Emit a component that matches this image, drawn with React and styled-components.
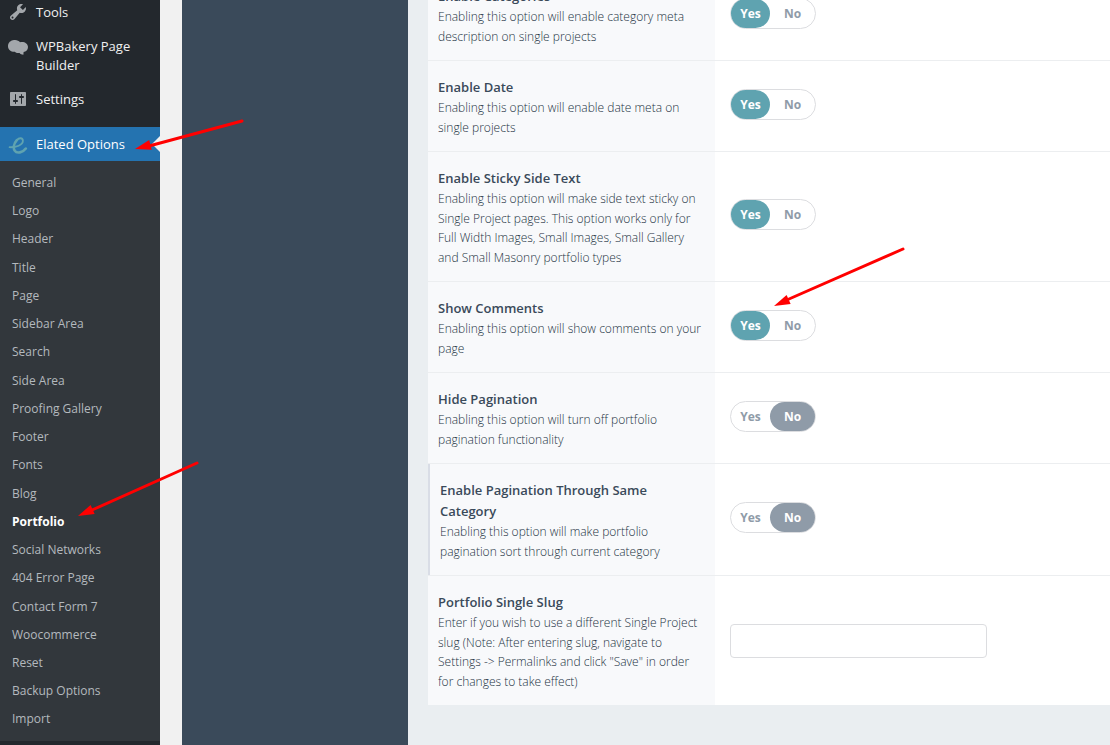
import React, { useState } from 'react'
import styled, { createGlobalStyle } from 'styled-components'

const GlobalStyle = createGlobalStyle`
  * {
    box-sizing: border-box;
  }

  body {
    margin: 0;
    background: #f1f1f1;
    font-family: 'Open Sans', 'Noto Sans', sans-serif;
    overflow: hidden;
  }
`

const Page = styled.div`
  position: relative;
  display: flex;
  height: 100vh;
  overflow: hidden;
`

const Sidebar = styled.nav`
  width: 160px;
  flex-shrink: 0;
  margin-top: -5px;
  background: #23282d;
`

const MenuItem = styled.a`
  position: relative;
  display: flex;
  align-items: flex-start;
  padding: 8px 12px 7px 8px;
  gap: 8px;
  background: ${props => (props.$active ? '#2473b0' : 'transparent')};
  color: ${props => (props.$active ? '#fff' : '#f0f0f1')};
  font-size: 13px;
  line-height: 19px;
  text-decoration: none;

  svg {
    flex-shrink: 0;
    width: 20px;
    height: 20px;
    margin-top: -1px;
    fill: #a3a7ab;
  }

  &::after {
    content: '';
    display: ${props => (props.$active ? 'block' : 'none')};
    position: absolute;
    right: 0;
    top: 50%;
    margin-top: -8px;
    border: 8px solid transparent;
    border-right-color: #f1f1f1;
  }
`

const Separator = styled.div`
  height: 11px;
`

const SubMenu = styled.ul`
  margin: 0;
  padding: 8px 0 7px;
  list-style: none;
  background: #32373c;
`

const SubItem = styled.a`
  display: block;
  padding: 5px 12px;
  color: ${props => (props.$current ? '#fff' : '#b4b9be')};
  font-size: 12px;
  font-weight: ${props => (props.$current ? 700 : 400)};
  line-height: 1.52;
  text-decoration: none;
`

const OptionsNav = styled.aside`
  width: 226px;
  flex-shrink: 0;
  margin-left: 22px;
  background: #3a4a5a;
`

const Content = styled.main`
  flex: 1;
  min-width: 0;
  padding-left: 20px;
  background: #eaeef1;
`

const OptionsForm = styled.form`
  margin-top: -31px;
  background: #fff;
`

const Row = styled.div`
  display: grid;
  grid-template-columns: 287px 1fr;
  border-top: 1px solid #eceef0;
`

const Description = styled.div`
  padding: 16px 10px 14px;
  background: #f8f9fb;
  border-left: ${props => (props.$dependent ? '2px solid #d9dde6' : '0')};
  color: #3a4a5a;
`

const Title = styled.label`
  display: block;
  font-size: 13px;
  font-weight: 600;
  line-height: 21px;
`

const Text = styled.p`
  margin: 0;
  color: #233242;
  font-size: 12px;
  font-weight: 300;
  line-height: 1.625;
`

const Control = styled.div`
  display: flex;
  align-items: center;
  padding: 0 15px;
`

const Switch = styled.div`
  display: flex;
  height: 31px;
  margin-bottom: 4px;
  border: 1px solid #dcdde0;
  border-radius: 16px;
  background: #fff;
`

const SwitchOption = styled.label`
  position: relative;
  width: ${props => (props.$wide ? 45 : 39)}px;
  border-radius: 15px;
  background: ${props => (props.$selected ? props.$color : 'transparent')};
  color: ${props => (props.$selected ? '#fff' : '#8f9ba8')};
  font-size: 12px;
  font-weight: 700;
  line-height: 29px;
  text-align: center;
  cursor: pointer;

  input {
    position: absolute;
    inset: 0;
    margin: 0;
    opacity: 0;
  }
`

const TextInput = styled.input`
  width: 257px;
  height: 34px;
  padding: 6px 12px;
  border: 1px solid #dcdde0;
  border-radius: 4px;
  background: #fff;
  color: #3a4a5a;
  font: inherit;
`

const Arrows = styled.svg`
  position: absolute;
  top: 0;
  left: 0;
  pointer-events: none;
`

const subItems = [
  'General',
  'Logo',
  'Header',
  'Title',
  'Page',
  'Sidebar Area',
  'Search',
  'Side Area',
  'Proofing Gallery',
  'Footer',
  'Fonts',
  'Blog',
  'Portfolio',
  'Social Networks',
  '404 Error Page',
  'Contact Form 7',
  'Woocommerce',
  'Reset',
  'Backup Options',
  'Import',
]

const options = [
  {
    id: 'categories',
    title: 'Enable Categories',
    text: 'Enabling this option will enable category meta description on single projects',
    value: 'yes',
  },
  {
    id: 'date',
    title: 'Enable Date',
    text: 'Enabling this option will enable date meta on single projects',
    value: 'yes',
  },
  {
    id: 'sticky',
    title: 'Enable Sticky Side Text',
    text: 'Enabling this option will make side text sticky on Single Project pages. This option works only for Full Width Images, Small Images, Small Gallery and Small Masonry portfolio types',
    value: 'yes',
  },
  {
    id: 'comments',
    title: 'Show Comments',
    text: 'Enabling this option will show comments on your page',
    value: 'yes',
  },
  {
    id: 'pagination',
    title: 'Hide Pagination',
    text: 'Enabling this option will turn off portfolio pagination functionality',
    value: 'no',
  },
  {
    id: 'same-category',
    title: 'Enable Pagination Through Same Category',
    text: 'Enabling this option will make portfolio pagination sort through current category',
    value: 'no',
    dependent: true,
  },
]

const arrows = [
  { shaft: 'M242 121L149 146', tip: [135, 149], angle: 165 },
  { shaft: 'M197 463L92 510', tip: [78, 516], angle: 156 },
  { shaft: 'M903 249L789 299', tip: [774, 306], angle: 156 },
]

const ToolsIcon = () => (
  <svg viewBox="0 0 20 20" aria-hidden="true">
    <path d="M16.68 9.77c-1.34 1.34-3.3 1.67-4.95.99l-5.41 6.52c-.99.99-2.59.99-3.58 0s-.99-2.59 0-3.57l6.52-5.42c-.68-1.65-.35-3.61.99-4.95 1.28-1.28 3.12-1.62 4.72-1.06l-2.89 2.89 2.82 2.82 2.86-2.87c.53 1.58.18 3.39-1.08 4.65zM3.81 16.21c.4.39 1.04.39 1.43 0 .4-.4.4-1.04 0-1.43-.39-.4-1.03-.4-1.43 0-.39.39-.39 1.03 0 1.43z" />
  </svg>
)

const BakeryIcon = () => (
  <svg viewBox="0 0 20 20" aria-hidden="true">
    <path d="M6 4C8.600 3.600 10.800 4.600 12 6.200C16 5.200 20 7.400 20 11C20 14 18 15.800 15.600 16L15.400 18.800C13.600 18.600 12.300 18 11.600 17C9.500 17.300 7.800 17 6.800 15.800C3 16 0 13.800 0 10.200C0 6.700 2.800 4.200 6 4Z" />
  </svg>
)

const SettingsIcon = () => (
  <svg viewBox="0 0 20 20" aria-hidden="true">
    <path d="M18 16V4c0-.55-.45-1-1-1H3c-.55 0-1 .45-1 1v12c0 .55.45 1 1 1h14c.55 0 1-.45 1-1zM8 11h1c.55 0 1 .45 1 1s-.45 1-1 1H8v1.5c0 .28-.22.5-.5.5s-.5-.22-.5-.5V13H6c-.55 0-1-.45-1-1s.45-1 1-1h1V5.500c0-.28.22-.5.5-.5s.5.22.5.5V11zm5-2h-1c-.55 0-1-.45-1-1s.45-1 1-1h1V5.500c0-.28.22-.5.5-.5s.5.22.5.5V7h1c.55 0 1 .45 1 1s-.45 1-1 1h-1v5.500c0 .28-.22.5-.5.5s-.5-.22-.5-.5V9z" />
  </svg>
)

const ElatedIcon = () => (
  <svg viewBox="0 0 20 20" aria-hidden="true">
    <g fill="none" stroke="#5fa3b0" strokeLinecap="round">
      <path d="M1.600 13.200C8 13.600 15 11 14.900 6.800C14.800 3.400 11 3.600 8.800 6.200" strokeWidth="1.800" />
      <path d="M8.800 6.200C5.800 9.600 5 14 6.700 16.600C8.800 20 15 18.600 17.800 14.600" strokeWidth="2.600" />
    </g>
  </svg>
)

const YesNo = ({ id, title, initial }) => {
  const [value, setValue] = useState(initial)

  return (
    <Switch role="radiogroup" aria-label={title}>
      <SwitchOption $selected={value === 'yes'} $color="#5fa3b0">
        <input
          id={`${id}-yes`}
          type="radio"
          name={id}
          checked={value === 'yes'}
          onChange={() => setValue('yes')}
        />
        Yes
      </SwitchOption>
      <SwitchOption $wide $selected={value === 'no'} $color="#8f9ba8">
        <input
          type="radio"
          name={id}
          checked={value === 'no'}
          onChange={() => setValue('no')}
        />
        No
      </SwitchOption>
    </Switch>
  )
}

const AdminMenu = () => (
  <Sidebar>
    <MenuItem href="#tools">
      <ToolsIcon />
      Tools
    </MenuItem>
    <MenuItem href="#wpbakery">
      <BakeryIcon />
      WPBakery Page Builder
    </MenuItem>
    <MenuItem href="#settings">
      <SettingsIcon />
      Settings
    </MenuItem>
    <Separator />
    <MenuItem href="#elated" $active>
      <ElatedIcon />
      Elated Options
    </MenuItem>
    <SubMenu>
      {subItems.map(item => (
        <li key={item}>
          <SubItem href="#options" $current={item === 'Portfolio'}>
            {item}
          </SubItem>
        </li>
      ))}
    </SubMenu>
  </Sidebar>
)

const App = () => {
  const [slug, setSlug] = useState('')

  return (
    <>
      <GlobalStyle />
      <Page>
        <AdminMenu />
        <OptionsNav />
        <Content>
          <OptionsForm>
            {options.map(option => (
              <Row key={option.id}>
                <Description $dependent={option.dependent}>
                  <Title htmlFor={`${option.id}-yes`}>{option.title}</Title>
                  <Text>{option.text}</Text>
                </Description>
                <Control>
                  <YesNo id={option.id} title={option.title} initial={option.value} />
                </Control>
              </Row>
            ))}
            <Row>
              <Description>
                <Title htmlFor="slug">Portfolio Single Slug</Title>
                <Text>
                  Enter if you wish to use a different Single Project slug (Note: After entering
                  slug, navigate to Settings -&gt; Permalinks and click "Save" in order for changes
                  to take effect)
                </Text>
              </Description>
              <Control>
                <TextInput
                  id="slug"
                  type="text"
                  value={slug}
                  onChange={e => setSlug(e.target.value)}
                />
              </Control>
            </Row>
          </OptionsForm>
        </Content>
        <Arrows width="1110" height="745" viewBox="0 0 1110 745" aria-hidden="true">
          {arrows.map(arrow => (
            <g key={arrow.shaft}>
              <path d={arrow.shaft} stroke="#ff0000" strokeWidth="3" strokeLinecap="round" />
              <path
                d="M0 0L-16 5L-16 -5Z"
                fill="#ff0000"
                transform={`translate(${arrow.tip}) rotate(${arrow.angle})`}
              />
            </g>
          ))}
        </Arrows>
      </Page>
    </>
  )
}

export default App
